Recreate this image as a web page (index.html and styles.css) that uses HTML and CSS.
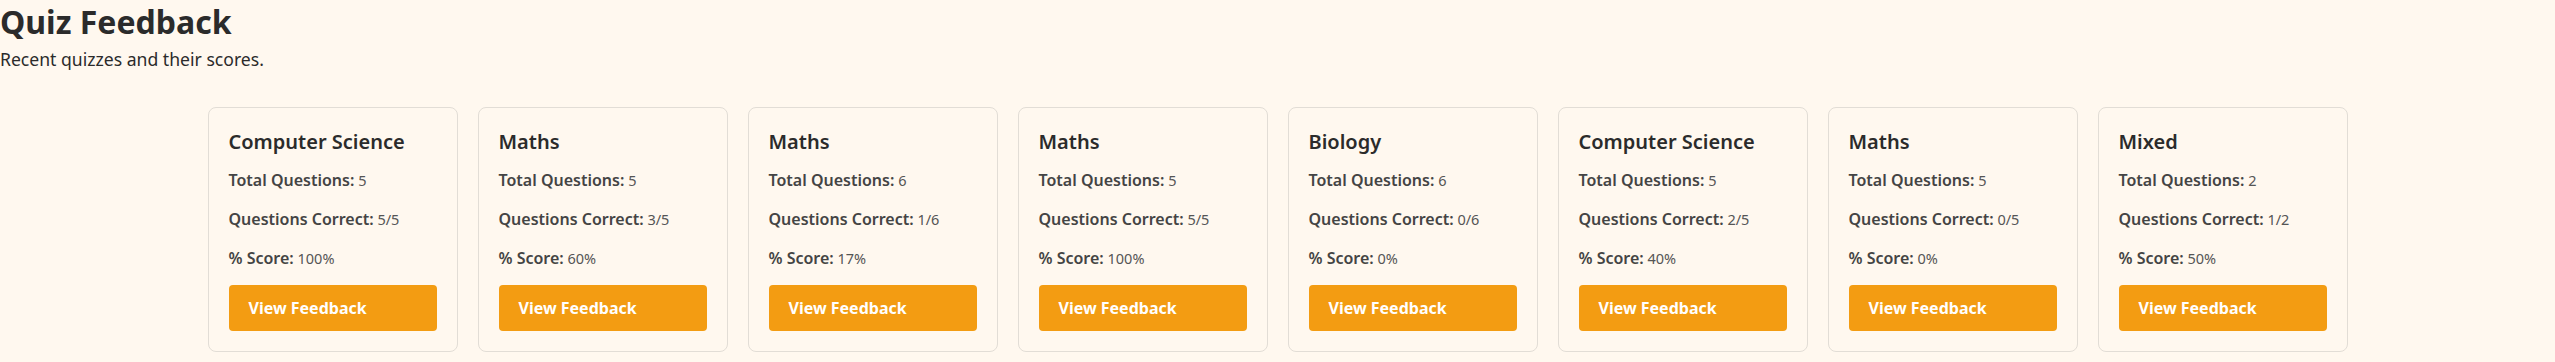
FILE: index.html
```html
<!DOCTYPE html>
<html lang="en">
<head>
    <meta charset="UTF-8">
    <meta name="viewport" content="width=device-width, initial-scale=1.0">
    <title>Quiz Feedback</title>
    <link rel="stylesheet" href="styles.css">
</head>
<body>

<div class="header">
    <h1>Quiz Feedback</h1>
    <p class="subtitle">Recent quizzes and their scores.</p>
</div>

<div class="quiz-list">
    <div class="quiz-card">
        <h3>Computer Science</h3>
        <p><strong>Total Questions:</strong> 5</p>
        <p><strong>Questions Correct:</strong> 5/5</p>
        <p><strong>% Score:</strong> 100%</p>
        <button class="feedback-button">View Feedback</button>
    </div>
    <div class="quiz-card">
        <h3>Maths</h3>
        <p><strong>Total Questions:</strong> 5</p>
        <p><strong>Questions Correct:</strong> 3/5</p>
        <p><strong>% Score:</strong> 60%</p>
        <button class="feedback-button">View Feedback</button>
    </div>
    <div class="quiz-card">
        <h3>Maths</h3>
        <p><strong>Total Questions:</strong> 6</p>
        <p><strong>Questions Correct:</strong> 1/6</p>
        <p><strong>% Score:</strong> 17%</p>
        <button class="feedback-button">View Feedback</button>
    </div>
    <div class="quiz-card">
        <h3>Maths</h3>
        <p><strong>Total Questions:</strong> 5</p>
        <p><strong>Questions Correct:</strong> 5/5</p>
        <p><strong>% Score:</strong> 100%</p>
        <button class="feedback-button">View Feedback</button>
    </div>
    <div class="quiz-card">
        <h3>Biology</h3>
        <p><strong>Total Questions:</strong> 6</p>
        <p><strong>Questions Correct:</strong> 0/6</p>
        <p><strong>% Score:</strong> 0%</p>
        <button class="feedback-button">View Feedback</button>
    </div>
    <div class="quiz-card">
        <h3>Computer Science</h3>
        <p><strong>Total Questions:</strong> 5</p>
        <p><strong>Questions Correct:</strong> 2/5</p>
        <p><strong>% Score:</strong> 40%</p>
        <button class="feedback-button">View Feedback</button>
    </div>
    <div class="quiz-card">
        <h3>Maths</h3>
        <p><strong>Total Questions:</strong> 5</p>
        <p><strong>Questions Correct:</strong> 0/5</p>
        <p><strong>% Score:</strong> 0%</p>
        <button class="feedback-button">View Feedback</button>
    </div>
    <div class="quiz-card">
        <h3>Mixed</h3>
        <p><strong>Total Questions:</strong> 2</p>
        <p><strong>Questions Correct:</strong> 1/2</p>
        <p><strong>% Score:</strong> 50%</p>
        <button class="feedback-button">View Feedback</button>
    </div>
</div>

</body>
</html>
```

FILE: styles.css
```css
body {
    font-family: 'Noto Sans', 'Open Sans', sans-serif;
    margin: 0;
    background-color: #fff8ef;
    color: #333;
}

.header h1 {
    margin: 0;
    font-size: 32px;
    color: #2b2b2b;
}

.subtitle {
    margin: 4px 0 0;
    font-size: 17.6px;
    color: #2b2b2b;
}

.quiz-list {
    display: flex;
    justify-content: center;
    gap: 20px;
    margin-top: 36px;
}

.quiz-card {
    width: 208px;
    padding: 20px;
    border: 1px solid #e2ddd6;
    border-radius: 8px;
    background-color: #fff8ef;
}

.quiz-card h3 {
    margin: 0 0 13px;
    font-size: 20px;
    font-weight: 600;
    color: #2b2b2b;
}

.quiz-card p {
    margin: 0 0 15px;
    font-size: 14.5px;
    line-height: 24px;
    color: #555;
}

.quiz-card strong {
    font-size: 16px;
    font-weight: 600;
    color: #444;
}

.feedback-button {
    display: block;
    width: 100%;
    height: 46px;
    padding: 0 20px;
    border: none;
    border-radius: 4px;
    background-color: #f39c12;
    color: white;
    font-family: inherit;
    font-size: 16px;
    font-weight: 700;
    text-align: left;
    cursor: pointer;
}
```
